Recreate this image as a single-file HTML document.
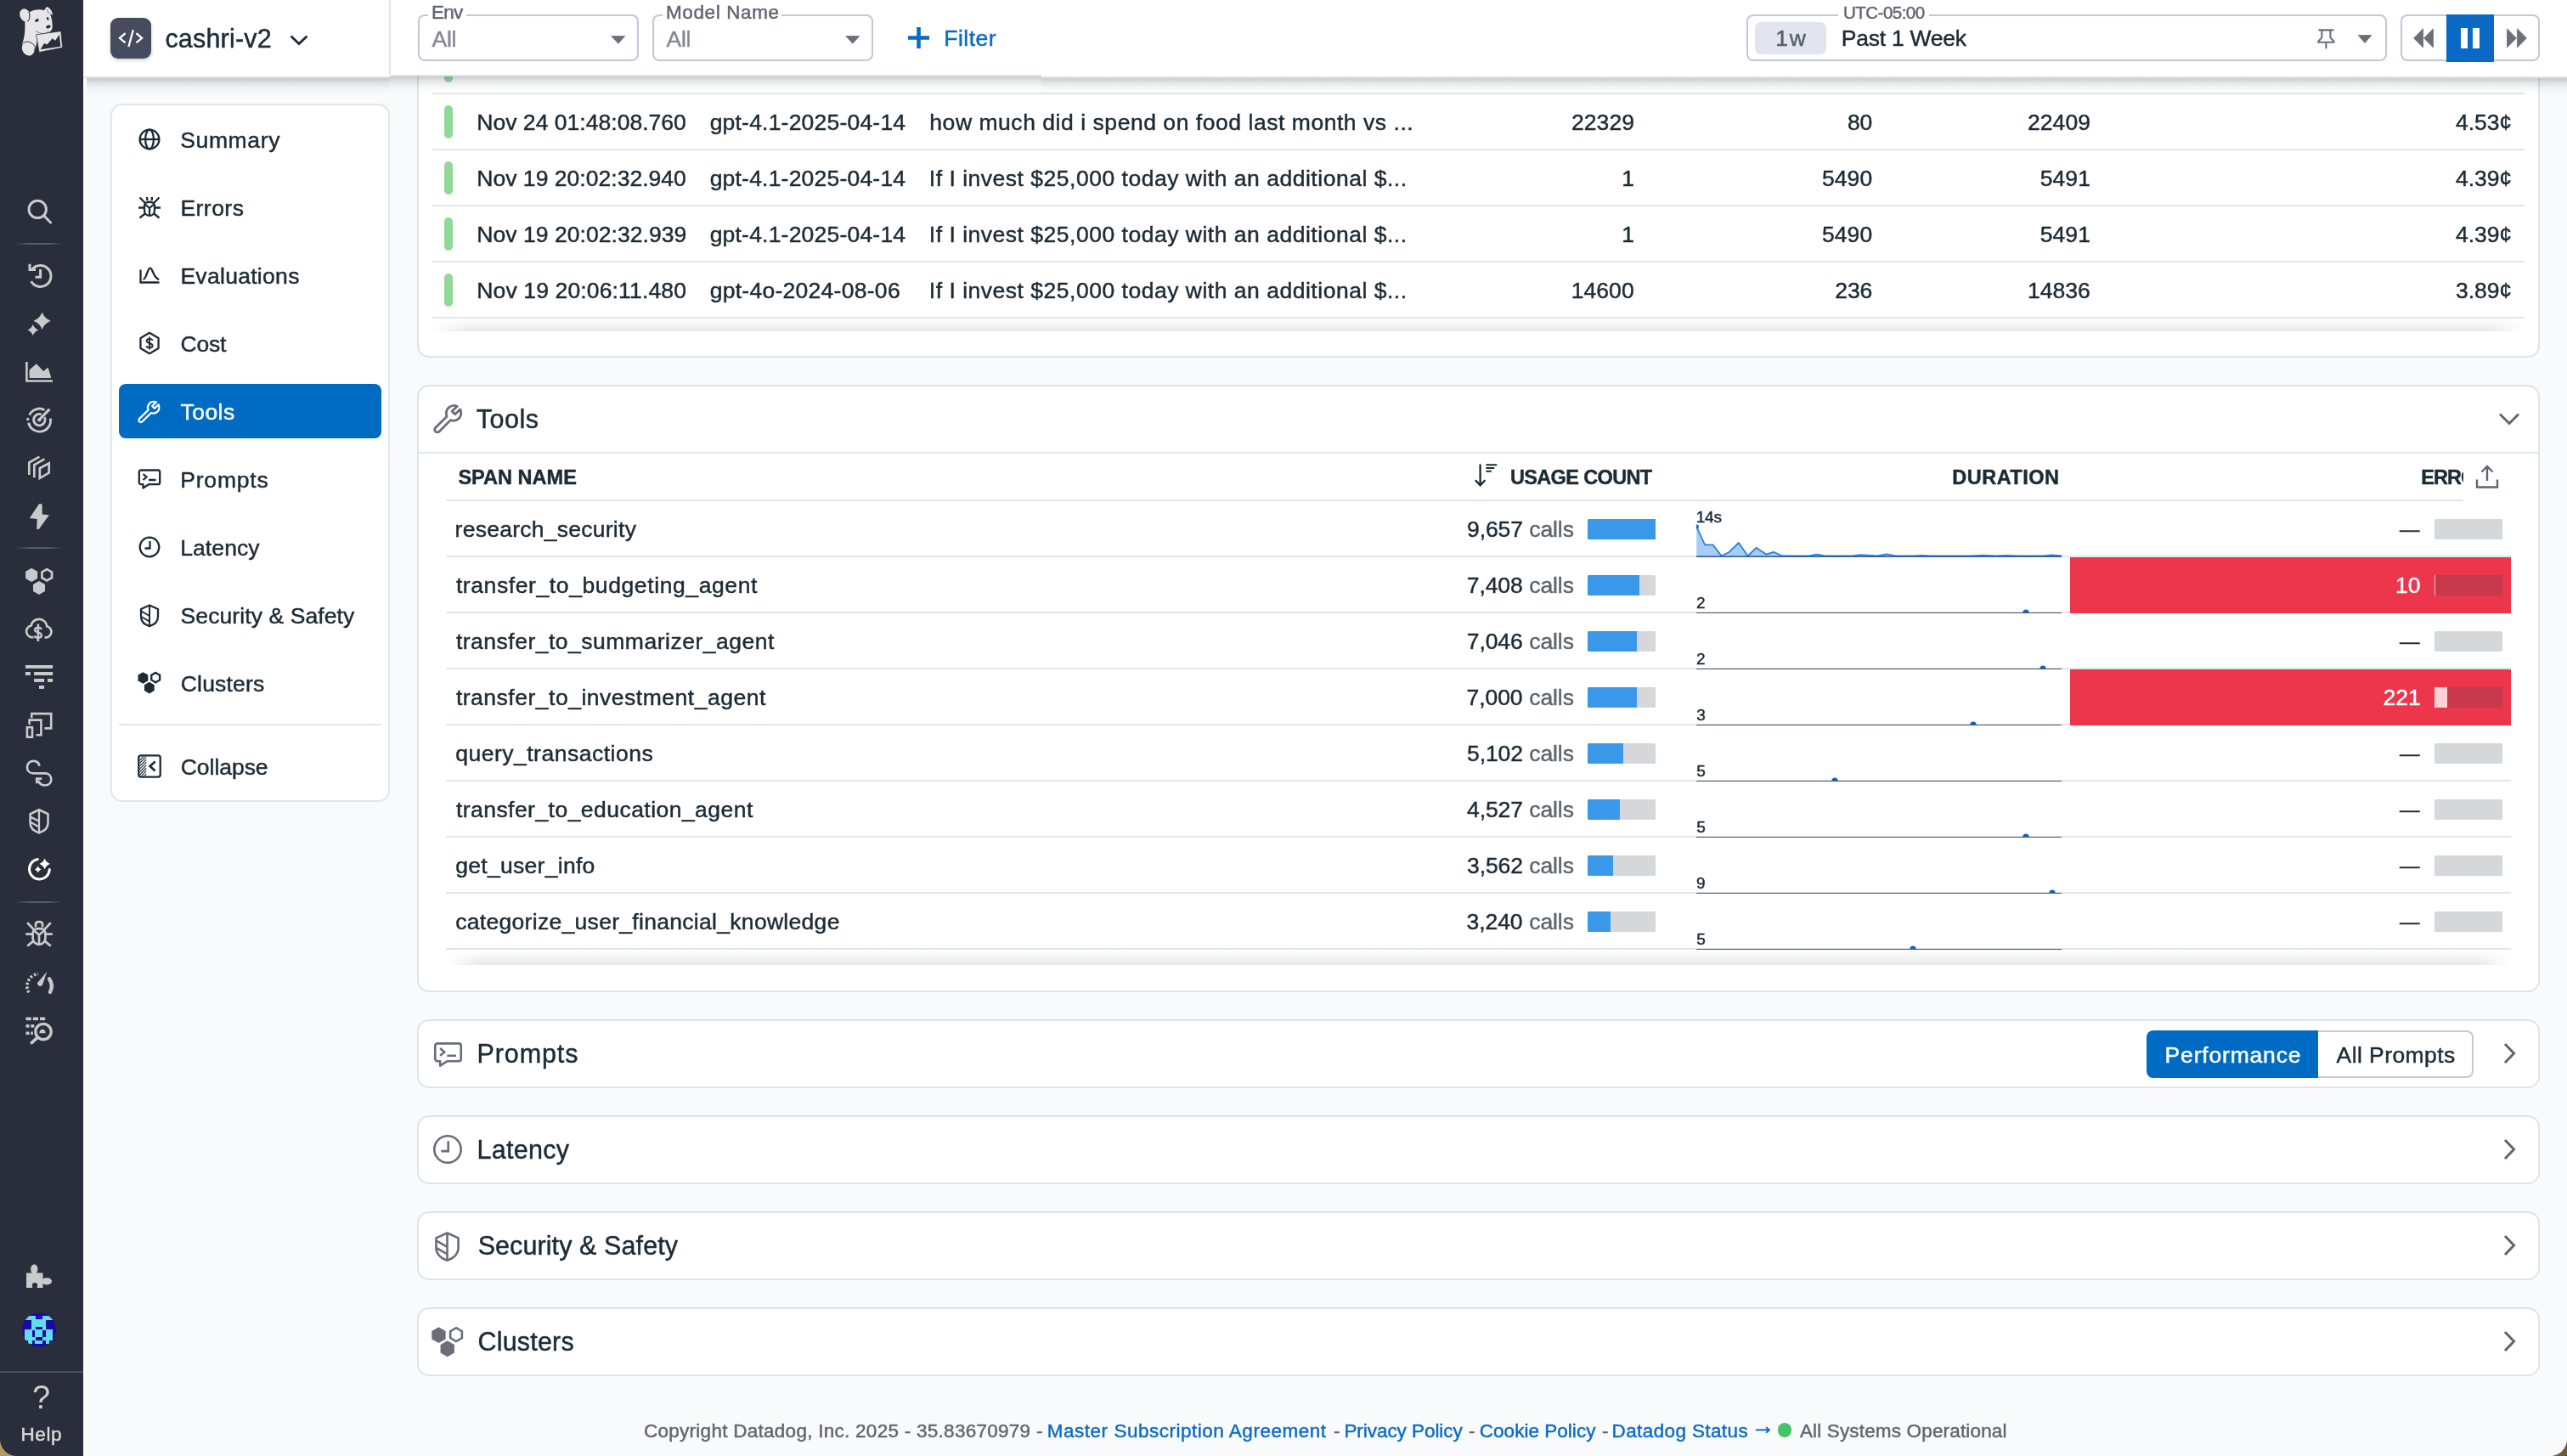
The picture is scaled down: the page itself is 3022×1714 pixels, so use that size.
<!DOCTYPE html>
<html lang="en"><head><meta charset="utf-8"><title>LLM Observability - cashri-v2</title><style>html,body{margin:0;padding:0}body{width:3022px;height:1714px;position:relative;overflow:hidden;background:#f9fafc;font-family:"Liberation Sans",sans-serif;}
#app{position:absolute;left:0;top:0;width:3022px;height:1714px;will-change:transform}
.b{position:absolute;display:block}.t{position:absolute;white-space:nowrap;display:block;-webkit-text-stroke:0.45px currentColor}</style></head><body>
<div id="app">
<div class="b" style="left:491px;top:-30px;width:2499px;height:451px;box-sizing:border-box;background:#fff;border:2px solid #e1e2ea;border-radius:14px;"></div>
<div class="b" style="left:509px;top:109px;width:2463px;height:2px;background:#e3e5ec;"></div>
<div class="b" style="left:509px;top:175px;width:2463px;height:2px;background:#e3e5ec;"></div>
<div class="b" style="left:509px;top:241px;width:2463px;height:2px;background:#e3e5ec;"></div>
<div class="b" style="left:509px;top:307px;width:2463px;height:2px;background:#e3e5ec;"></div>
<div class="b" style="left:509px;top:373px;width:2463px;height:2px;background:#e3e5ec;"></div>
<div class="b" style="left:523px;top:58px;width:10px;height:39px;background:#92d997;border-radius:5px;"></div>
<div class="b" style="left:523px;top:123.5px;width:10px;height:39.5px;background:#92d997;border-radius:5px;"></div>
<span class="t" style="left:561.28px;top:130.97px;font-size:26.5px;line-height:26.5px;color:#1c2b34;letter-spacing:0.03px;">Nov 24 01:48:08.760</span>
<span class="t" style="left:835.64px;top:130.97px;font-size:26.5px;line-height:26.5px;color:#1c2b34;letter-spacing:0.21px;">gpt-4.1-2025-04-14</span>
<span class="t" style="left:1094.35px;top:130.97px;font-size:26.5px;line-height:26.5px;color:#1c2b34;letter-spacing:0.54px;">how much did i spend on food last month vs ...</span>
<span class="t" style="left:1850.02px;top:130.97px;font-size:26.5px;line-height:26.5px;color:#1c2b34;letter-spacing:0.05px;">22329</span>
<span class="t" style="left:2174.89px;top:130.97px;font-size:26.5px;line-height:26.5px;color:#1c2b34;letter-spacing:-0.18px;">80</span>
<span class="t" style="left:2387.02px;top:130.97px;font-size:26.5px;line-height:26.5px;color:#1c2b34;letter-spacing:0.05px;">22409</span>
<span class="t" style="left:2891.06px;top:130.97px;font-size:26.5px;line-height:26.5px;color:#1c2b34;letter-spacing:-0.08px;">4.53¢</span>
<div class="b" style="left:523px;top:189.5px;width:10px;height:39.5px;background:#92d997;border-radius:5px;"></div>
<span class="t" style="left:561.28px;top:196.97px;font-size:26.5px;line-height:26.5px;color:#1c2b34;letter-spacing:0.03px;">Nov 19 20:02:32.940</span>
<span class="t" style="left:835.64px;top:196.97px;font-size:26.5px;line-height:26.5px;color:#1c2b34;letter-spacing:0.21px;">gpt-4.1-2025-04-14</span>
<span class="t" style="left:1093.82px;top:196.97px;font-size:26.5px;line-height:26.5px;color:#1c2b34;letter-spacing:0.51px;">If I invest $25,000 today with an additional $...</span>
<span class="t" style="left:1909.19px;top:196.97px;font-size:26.5px;line-height:26.5px;color:#1c2b34;">1</span>
<span class="t" style="left:2145.08px;top:196.97px;font-size:26.5px;line-height:26.5px;color:#1c2b34;letter-spacing:0.03px;">5490</span>
<span class="t" style="left:2401.84px;top:196.97px;font-size:26.5px;line-height:26.5px;color:#1c2b34;letter-spacing:0.03px;">5491</span>
<span class="t" style="left:2891.06px;top:196.97px;font-size:26.5px;line-height:26.5px;color:#1c2b34;letter-spacing:-0.08px;">4.39¢</span>
<div class="b" style="left:523px;top:255.5px;width:10px;height:39.5px;background:#92d997;border-radius:5px;"></div>
<span class="t" style="left:561.28px;top:262.97px;font-size:26.5px;line-height:26.5px;color:#1c2b34;letter-spacing:0.05px;">Nov 19 20:02:32.939</span>
<span class="t" style="left:835.64px;top:262.97px;font-size:26.5px;line-height:26.5px;color:#1c2b34;letter-spacing:0.21px;">gpt-4.1-2025-04-14</span>
<span class="t" style="left:1093.82px;top:262.97px;font-size:26.5px;line-height:26.5px;color:#1c2b34;letter-spacing:0.51px;">If I invest $25,000 today with an additional $...</span>
<span class="t" style="left:1909.19px;top:262.97px;font-size:26.5px;line-height:26.5px;color:#1c2b34;">1</span>
<span class="t" style="left:2145.08px;top:262.97px;font-size:26.5px;line-height:26.5px;color:#1c2b34;letter-spacing:0.03px;">5490</span>
<span class="t" style="left:2401.84px;top:262.97px;font-size:26.5px;line-height:26.5px;color:#1c2b34;letter-spacing:0.03px;">5491</span>
<span class="t" style="left:2891.06px;top:262.97px;font-size:26.5px;line-height:26.5px;color:#1c2b34;letter-spacing:-0.08px;">4.39¢</span>
<div class="b" style="left:523px;top:321.5px;width:10px;height:39.5px;background:#92d997;border-radius:5px;"></div>
<span class="t" style="left:561.28px;top:328.97px;font-size:26.5px;line-height:26.5px;color:#1c2b34;letter-spacing:0.14px;">Nov 19 20:06:11.480</span>
<span class="t" style="left:835.64px;top:328.97px;font-size:26.5px;line-height:26.5px;color:#1c2b34;letter-spacing:0.28px;">gpt-4o-2024-08-06</span>
<span class="t" style="left:1093.82px;top:328.97px;font-size:26.5px;line-height:26.5px;color:#1c2b34;letter-spacing:0.51px;">If I invest $25,000 today with an additional $...</span>
<span class="t" style="left:1849.76px;top:328.97px;font-size:26.5px;line-height:26.5px;color:#1c2b34;letter-spacing:0.05px;">14600</span>
<span class="t" style="left:2160.18px;top:328.97px;font-size:26.5px;line-height:26.5px;color:#1c2b34;letter-spacing:-0.02px;">236</span>
<span class="t" style="left:2386.89px;top:328.97px;font-size:26.5px;line-height:26.5px;color:#1c2b34;letter-spacing:0.05px;">14836</span>
<span class="t" style="left:2891.06px;top:328.97px;font-size:26.5px;line-height:26.5px;color:#1c2b34;letter-spacing:-0.08px;">3.89¢</span>
<div class="b" style="left:509px;top:375px;width:2463px;height:15px;background:linear-gradient(to bottom,rgba(20,25,40,0),rgba(20,25,40,.095));-webkit-mask-image:linear-gradient(to right,transparent,#000 40px,#000 calc(100% - 40px),transparent);"></div>
<div class="b" style="left:491px;top:453px;width:2499px;height:715px;box-sizing:border-box;background:#fff;border:2px solid #e1e2ea;border-radius:14px;"></div>
<span class="t" style="left:560.79px;top:477.68px;font-size:30.5px;line-height:30.5px;color:#1c2b34;letter-spacing:0.5px;">Tools</span>
<div class="b" style="left:493px;top:532px;width:2495px;height:2px;background:#e3e5ec;"></div>
<div class="b" style="left:525px;top:588px;width:2375px;height:2px;background:#e3e5ec;"></div>
<span class="t" style="left:539.39px;top:551.01px;font-size:23.5px;line-height:23.5px;color:#1c2b34;letter-spacing:0.03px;font-weight:700;">SPAN NAME</span>
<span class="t" style="left:1777.89px;top:551.01px;font-size:23.5px;line-height:23.5px;color:#1c2b34;letter-spacing:-0.63px;font-weight:700;">USAGE COUNT</span>
<span class="t" style="left:2298.27px;top:551.01px;font-size:23.5px;line-height:23.5px;color:#1c2b34;letter-spacing:0.49px;font-weight:700;">DURATION</span>
<div class="b" style="left:2840px;top:540px;width:60px;height:44px;overflow:hidden">
<span class="t" style="left:10.37px;top:11.01px;font-size:23.5px;line-height:23.5px;color:#1c2b34;letter-spacing:-0.97px;font-weight:700;">ERRORS</span>
</div>
<div class="b" style="left:2437px;top:656px;width:519px;height:66px;background:#eb364b;"></div>
<div class="b" style="left:2437px;top:788px;width:519px;height:66px;background:#eb364b;"></div>
<div class="b" style="left:525px;top:654px;width:2431px;height:2px;background:#e3e5ec"></div>
<span class="t" style="left:535.58px;top:610.47px;font-size:26.5px;line-height:26.5px;color:#1c2b34;letter-spacing:0.26px;">research_security</span>
<span class="t" style="left:1800.24px;top:610.47px;font-size:26.5px;line-height:26.5px;color:#5e6670;letter-spacing:-0.09px;">calls</span>
<span class="t" style="left:1727.00px;top:610.47px;font-size:26.5px;line-height:26.5px;color:#1c2b34;letter-spacing:-0.08px;">9,657</span>
<div class="b" style="left:1869px;top:611px;width:80px;height:24px;background:#d6d7da;border-radius:1.5px;"></div>
<div class="b" style="left:1869px;top:611px;width:80.0px;height:24px;background:#3a98ea;border-radius:1.5px 0 0 1.5px;"></div>
<span class="t" style="left:1996.68px;top:599.02px;font-size:19.0px;line-height:19.0px;color:#1c2b34;letter-spacing:-0.12px;">14s</span>
<div class="b" style="left:1997px;top:654.5px;width:430px;height:1.3px;background:#4d546a;"></div>
<span class="t" style="left:2825.10px;top:611.61px;font-size:23.5px;line-height:23.5px;color:#1c2b34;">—</span>
<div class="b" style="left:2866px;top:611px;width:80px;height:24px;background:#d6d7da;border-radius:1.5px;"></div>
<div class="b" style="left:525px;top:720px;width:1912px;height:2px;background:#e3e5ec"></div>
<span class="t" style="left:536.90px;top:676.47px;font-size:26.5px;line-height:26.5px;color:#1c2b34;letter-spacing:0.6px;">transfer_to_budgeting_agent</span>
<span class="t" style="left:1800.24px;top:676.47px;font-size:26.5px;line-height:26.5px;color:#5e6670;letter-spacing:-0.09px;">calls</span>
<span class="t" style="left:1726.73px;top:676.47px;font-size:26.5px;line-height:26.5px;color:#1c2b34;letter-spacing:-0.08px;">7,408</span>
<div class="b" style="left:1869px;top:677px;width:80px;height:24px;background:#d6d7da;border-radius:1.5px;"></div>
<div class="b" style="left:1869px;top:677px;width:61.4px;height:24px;background:#3a98ea;border-radius:1.5px 0 0 1.5px;"></div>
<span class="t" style="left:1996.95px;top:700.12px;font-size:19.0px;line-height:19.0px;color:#1c2b34;">2</span>
<div class="b" style="left:1997px;top:720.5px;width:430px;height:1.3px;background:#4d546a;"></div>
<svg class="b" style="left:2379.8px;top:715px" width="10" height="6" viewBox="0 0 10 6"><circle cx="5" cy="6" r="3.6" fill="#0b63c4"/></svg>
<span class="t" style="left:2820.09px;top:676.47px;font-size:26.5px;line-height:26.5px;color:#fff;letter-spacing:-0.18px;">10</span>
<div class="b" style="left:2866px;top:677px;width:80px;height:24px;background:#c8394d;"></div>
<div class="b" style="left:2866px;top:677px;width:1px;height:24px;background:#f6b9c0;"></div>
<div class="b" style="left:525px;top:786px;width:2431px;height:2px;background:#e3e5ec"></div>
<span class="t" style="left:536.90px;top:742.47px;font-size:26.5px;line-height:26.5px;color:#1c2b34;letter-spacing:0.5px;">transfer_to_summarizer_agent</span>
<span class="t" style="left:1800.24px;top:742.47px;font-size:26.5px;line-height:26.5px;color:#5e6670;letter-spacing:-0.09px;">calls</span>
<span class="t" style="left:1726.73px;top:742.47px;font-size:26.5px;line-height:26.5px;color:#1c2b34;letter-spacing:-0.08px;">7,046</span>
<div class="b" style="left:1869px;top:743px;width:80px;height:24px;background:#d6d7da;border-radius:1.5px;"></div>
<div class="b" style="left:1869px;top:743px;width:58.4px;height:24px;background:#3a98ea;border-radius:1.5px 0 0 1.5px;"></div>
<span class="t" style="left:1996.95px;top:766.12px;font-size:19.0px;line-height:19.0px;color:#1c2b34;">2</span>
<div class="b" style="left:1997px;top:786.5px;width:430px;height:1.3px;background:#4d546a;"></div>
<svg class="b" style="left:2400.4px;top:781px" width="10" height="6" viewBox="0 0 10 6"><circle cx="5" cy="6" r="3.6" fill="#0b63c4"/></svg>
<span class="t" style="left:2825.10px;top:743.61px;font-size:23.5px;line-height:23.5px;color:#1c2b34;">—</span>
<div class="b" style="left:2866px;top:743px;width:80px;height:24px;background:#d6d7da;border-radius:1.5px;"></div>
<div class="b" style="left:525px;top:852px;width:1912px;height:2px;background:#e3e5ec"></div>
<span class="t" style="left:536.90px;top:808.47px;font-size:26.5px;line-height:26.5px;color:#1c2b34;letter-spacing:0.51px;">transfer_to_investment_agent</span>
<span class="t" style="left:1800.24px;top:808.47px;font-size:26.5px;line-height:26.5px;color:#5e6670;letter-spacing:-0.09px;">calls</span>
<span class="t" style="left:1726.60px;top:808.47px;font-size:26.5px;line-height:26.5px;color:#1c2b34;letter-spacing:-0.08px;">7,000</span>
<div class="b" style="left:1869px;top:809px;width:80px;height:24px;background:#d6d7da;border-radius:1.5px;"></div>
<div class="b" style="left:1869px;top:809px;width:58.0px;height:24px;background:#3a98ea;border-radius:1.5px 0 0 1.5px;"></div>
<span class="t" style="left:1997.14px;top:832.12px;font-size:19.0px;line-height:19.0px;color:#1c2b34;">3</span>
<div class="b" style="left:1997px;top:852.5px;width:430px;height:1.3px;background:#4d546a;"></div>
<svg class="b" style="left:2318px;top:847px" width="10" height="6" viewBox="0 0 10 6"><circle cx="5" cy="6" r="3.6" fill="#0b63c4"/></svg>
<span class="t" style="left:2805.51px;top:808.47px;font-size:26.5px;line-height:26.5px;color:#fff;letter-spacing:-0.02px;">221</span>
<div class="b" style="left:2866px;top:809px;width:80px;height:24px;background:#c8394d;"></div>
<div class="b" style="left:2866px;top:809px;width:15px;height:24px;background:#fbd3d7;"></div>
<div class="b" style="left:525px;top:918px;width:2431px;height:2px;background:#e3e5ec"></div>
<span class="t" style="left:536.24px;top:874.47px;font-size:26.5px;line-height:26.5px;color:#1c2b34;letter-spacing:0.5px;">query_transactions</span>
<span class="t" style="left:1800.24px;top:874.47px;font-size:26.5px;line-height:26.5px;color:#5e6670;letter-spacing:-0.09px;">calls</span>
<span class="t" style="left:1727.00px;top:874.47px;font-size:26.5px;line-height:26.5px;color:#1c2b34;letter-spacing:-0.08px;">5,102</span>
<div class="b" style="left:1869px;top:875px;width:80px;height:24px;background:#d6d7da;border-radius:1.5px;"></div>
<div class="b" style="left:1869px;top:875px;width:42.2px;height:24px;background:#3a98ea;border-radius:1.5px 0 0 1.5px;"></div>
<span class="t" style="left:1997.14px;top:898.12px;font-size:19.0px;line-height:19.0px;color:#1c2b34;">5</span>
<div class="b" style="left:1997px;top:918.5px;width:430px;height:1.3px;background:#4d546a;"></div>
<svg class="b" style="left:2154.6px;top:913px" width="10" height="6" viewBox="0 0 10 6"><circle cx="5" cy="6" r="3.6" fill="#0b63c4"/></svg>
<span class="t" style="left:2825.10px;top:875.61px;font-size:23.5px;line-height:23.5px;color:#1c2b34;">—</span>
<div class="b" style="left:2866px;top:875px;width:80px;height:24px;background:#d6d7da;border-radius:1.5px;"></div>
<div class="b" style="left:525px;top:984px;width:2431px;height:2px;background:#e3e5ec"></div>
<span class="t" style="left:536.90px;top:940.47px;font-size:26.5px;line-height:26.5px;color:#1c2b34;letter-spacing:0.46px;">transfer_to_education_agent</span>
<span class="t" style="left:1800.24px;top:940.47px;font-size:26.5px;line-height:26.5px;color:#5e6670;letter-spacing:-0.09px;">calls</span>
<span class="t" style="left:1727.00px;top:940.47px;font-size:26.5px;line-height:26.5px;color:#1c2b34;letter-spacing:-0.08px;">4,527</span>
<div class="b" style="left:1869px;top:941px;width:80px;height:24px;background:#d6d7da;border-radius:1.5px;"></div>
<div class="b" style="left:1869px;top:941px;width:37.5px;height:24px;background:#3a98ea;border-radius:1.5px 0 0 1.5px;"></div>
<span class="t" style="left:1997.14px;top:964.12px;font-size:19.0px;line-height:19.0px;color:#1c2b34;">5</span>
<div class="b" style="left:1997px;top:984.5px;width:430px;height:1.3px;background:#4d546a;"></div>
<svg class="b" style="left:2379.5px;top:979px" width="10" height="6" viewBox="0 0 10 6"><circle cx="5" cy="6" r="3.6" fill="#0b63c4"/></svg>
<span class="t" style="left:2825.10px;top:941.61px;font-size:23.5px;line-height:23.5px;color:#1c2b34;">—</span>
<div class="b" style="left:2866px;top:941px;width:80px;height:24px;background:#d6d7da;border-radius:1.5px;"></div>
<div class="b" style="left:525px;top:1050px;width:2431px;height:2px;background:#e3e5ec"></div>
<span class="t" style="left:536.24px;top:1006.47px;font-size:26.5px;line-height:26.5px;color:#1c2b34;letter-spacing:0.29px;">get_user_info</span>
<span class="t" style="left:1800.24px;top:1006.47px;font-size:26.5px;line-height:26.5px;color:#5e6670;letter-spacing:-0.09px;">calls</span>
<span class="t" style="left:1727.00px;top:1006.47px;font-size:26.5px;line-height:26.5px;color:#1c2b34;letter-spacing:-0.08px;">3,562</span>
<div class="b" style="left:1869px;top:1007px;width:80px;height:24px;background:#d6d7da;border-radius:1.5px;"></div>
<div class="b" style="left:1869px;top:1007px;width:29.5px;height:24px;background:#3a98ea;border-radius:1.5px 0 0 1.5px;"></div>
<span class="t" style="left:1997.05px;top:1030.12px;font-size:19.0px;line-height:19.0px;color:#1c2b34;">9</span>
<div class="b" style="left:1997px;top:1050.5px;width:430px;height:1.3px;background:#4d546a;"></div>
<svg class="b" style="left:2410.5px;top:1045px" width="10" height="6" viewBox="0 0 10 6"><circle cx="5" cy="6" r="3.6" fill="#0b63c4"/></svg>
<span class="t" style="left:2825.10px;top:1007.61px;font-size:23.5px;line-height:23.5px;color:#1c2b34;">—</span>
<div class="b" style="left:2866px;top:1007px;width:80px;height:24px;background:#d6d7da;border-radius:1.5px;"></div>
<div class="b" style="left:525px;top:1116px;width:2431px;height:2px;background:#e3e5ec"></div>
<span class="t" style="left:536.24px;top:1072.47px;font-size:26.5px;line-height:26.5px;color:#1c2b34;letter-spacing:0.3px;">categorize_user_financial_knowledge</span>
<span class="t" style="left:1800.24px;top:1072.47px;font-size:26.5px;line-height:26.5px;color:#5e6670;letter-spacing:-0.09px;">calls</span>
<span class="t" style="left:1726.60px;top:1072.47px;font-size:26.5px;line-height:26.5px;color:#1c2b34;letter-spacing:-0.08px;">3,240</span>
<div class="b" style="left:1869px;top:1073px;width:80px;height:24px;background:#d6d7da;border-radius:1.5px;"></div>
<div class="b" style="left:1869px;top:1073px;width:26.9px;height:24px;background:#3a98ea;border-radius:1.5px 0 0 1.5px;"></div>
<span class="t" style="left:1997.14px;top:1096.12px;font-size:19.0px;line-height:19.0px;color:#1c2b34;">5</span>
<div class="b" style="left:1997px;top:1116.5px;width:430px;height:1.3px;background:#4d546a;"></div>
<svg class="b" style="left:2247px;top:1111px" width="10" height="6" viewBox="0 0 10 6"><circle cx="5" cy="6" r="3.6" fill="#0b63c4"/></svg>
<span class="t" style="left:2825.10px;top:1073.61px;font-size:23.5px;line-height:23.5px;color:#1c2b34;">—</span>
<div class="b" style="left:2866px;top:1073px;width:80px;height:24px;background:#d6d7da;border-radius:1.5px;"></div>
<svg class="b" style="left:1990px;top:600px" width="450" height="60" viewBox="0 0 450 60"><polygon points="7.2,19.9 17.1,41.4 26.5,41.4 36.7,54.5 45.2,50.2 56.9,39.0 67.6,54.5 77.5,44.8 89.1,52.6 98.1,49.8 108.2,54.5 139.6,54.5 148.9,52.6 158.3,54.5 191.0,54.5 200.4,53.2 220.0,54.5 231.2,52.3 241.5,54.5 262.0,54.5 272.0,53.8 282.0,54.5 330.0,54.5 345.0,53.6 360.0,54.5 373.0,53.8 386.0,54.5 415.0,54.5 425.7,53.5 437.0,54.5 437,55 7.2,55" fill="#a8cdf4"/><polyline points="7.2,19.9 17.1,41.4 26.5,41.4 36.7,54.5 45.2,50.2 56.9,39.0 67.6,54.5 77.5,44.8 89.1,52.6 98.1,49.8 108.2,54.5 139.6,54.5 148.9,52.6 158.3,54.5 191.0,54.5 200.4,53.2 220.0,54.5 231.2,52.3 241.5,54.5 262.0,54.5 272.0,53.8 282.0,54.5 330.0,54.5 345.0,53.6 360.0,54.5 373.0,53.8 386.0,54.5 415.0,54.5 425.7,53.5 437.0,54.5" fill="none" stroke="#2a80db" stroke-width="1.8" stroke-linejoin="round"/><rect x="7" y="54.4" width="430" height="1.4" fill="#2b5f9e"/><path d="M7.2 17.2A2.7 2.7 0 0 1 7.2 22.6Z" fill="#1668c9"/></svg>
<div class="b" style="left:2900px;top:540px;width:56px;height:46px;background:#fff;"></div>
<div class="b" style="left:525px;top:1119px;width:2431px;height:17px;background:linear-gradient(to bottom,rgba(20,25,40,0),rgba(20,25,40,.10));-webkit-mask-image:linear-gradient(to right,transparent,#000 40px,#000 calc(100% - 40px),transparent);"></div>
<div class="b" style="left:491px;top:1200px;width:2499px;height:80.5px;box-sizing:border-box;background:#fff;border:2px solid #e1e2ea;border-radius:14px;"></div>
<span class="t" style="left:561.56px;top:1224.58px;font-size:30.5px;line-height:30.5px;color:#1c2b34;letter-spacing:0.89px;">Prompts</span>
<div class="b" style="left:491px;top:1313.2px;width:2499px;height:80.5px;box-sizing:border-box;background:#fff;border:2px solid #e1e2ea;border-radius:14px;"></div>
<span class="t" style="left:561.56px;top:1337.78px;font-size:30.5px;line-height:30.5px;color:#1c2b34;letter-spacing:0.26px;">Latency</span>
<div class="b" style="left:491px;top:1426px;width:2499px;height:80.5px;box-sizing:border-box;background:#fff;border:2px solid #e1e2ea;border-radius:14px;"></div>
<span class="t" style="left:562.63px;top:1450.58px;font-size:30.5px;line-height:30.5px;color:#1c2b34;letter-spacing:0.09px;">Security &amp; Safety</span>
<div class="b" style="left:491px;top:1539.4px;width:2499px;height:80.5px;box-sizing:border-box;background:#fff;border:2px solid #e1e2ea;border-radius:14px;"></div>
<span class="t" style="left:562.48px;top:1563.98px;font-size:30.5px;line-height:30.5px;color:#1c2b34;letter-spacing:0.19px;">Clusters</span>
<div class="b" style="left:2527px;top:1213px;width:202px;height:56px;background:#006bc2;border-radius:8px 0 0 8px;"></div>
<div class="b" style="left:2729px;top:1213px;width:183px;height:56px;box-sizing:border-box;background:#fff;border:2px solid #c4c8dc;border-left:none;border-radius:0 8px 8px 0;"></div>
<span class="t" style="left:2548.58px;top:1228.87px;font-size:26.5px;line-height:26.5px;color:#fff;letter-spacing:0.82px;">Performance</span>
<span class="t" style="left:2750.60px;top:1228.87px;font-size:26.5px;line-height:26.5px;color:#1c2b34;letter-spacing:0.42px;">All Prompts</span>
<span class="t" style="left:757.98px;top:1673.85px;font-size:22.5px;line-height:22.5px;color:#5e6670;letter-spacing:0.27px;">Copyright Datadog, Inc. 2025 - 35.83670979</span>
<span class="t" style="left:1219.89px;top:1673.85px;font-size:22.5px;line-height:22.5px;color:#5e6670;">-</span>
<span class="t" style="left:1232.80px;top:1673.85px;font-size:22.5px;line-height:22.5px;color:#0b6bc5;letter-spacing:0.51px;">Master Subscription Agreement</span>
<span class="t" style="left:1569.89px;top:1673.85px;font-size:22.5px;line-height:22.5px;color:#5e6670;">-</span>
<span class="t" style="left:1582.40px;top:1673.85px;font-size:22.5px;line-height:22.5px;color:#0b6bc5;letter-spacing:-0.05px;">Privacy Policy</span>
<span class="t" style="left:1728.89px;top:1673.85px;font-size:22.5px;line-height:22.5px;color:#5e6670;">-</span>
<span class="t" style="left:1741.78px;top:1673.85px;font-size:22.5px;line-height:22.5px;color:#0b6bc5;letter-spacing:0.03px;">Cookie Policy</span>
<span class="t" style="left:1885.89px;top:1673.85px;font-size:22.5px;line-height:22.5px;color:#5e6670;">-</span>
<span class="t" style="left:1897.60px;top:1673.85px;font-size:22.5px;line-height:22.5px;color:#0b6bc5;letter-spacing:0.38px;">Datadog Status</span>
<span class="t" style="left:2118.90px;top:1673.85px;font-size:22.5px;line-height:22.5px;color:#5e6670;letter-spacing:0.16px;">All Systems Operational</span>
<div class="b" style="left:2092.6px;top:1675px;width:16.6px;height:16.6px;background:#41c464;border-radius:50%;"></div>
<span class="t" style="left:2061.16px;top:1665.40px;font-size:28.0px;line-height:28.0px;color:#0b6bc5;-webkit-text-stroke:0.7px #0b6bc5;">→</span>
<svg class="b" style="left:510px;top:473.5px" width="36" height="36" viewBox="0 0 36 36"><g fill="none" stroke="#696e78" stroke-width="2.15" transform="translate(18 18) scale(1.3) translate(-18 -18)"><path d="M28.6 10.2L24 14.8L21.2 12L25.8 7.4C22.8 6.2 19.2 7 17.3 9.6C15.7 11.8 15.6 14.4 16.5 16.6L6.2 26.9C5.2 27.9 5.2 29.4 6.2 30.3C7.2 31.3 8.6 31.3 9.6 30.3L19.9 20C22.2 20.9 24.9 20.6 27 18.9C29.4 16.9 30 13.2 28.6 10.2Z" stroke-linejoin="round"/></g></svg>
<svg class="b" style="left:504.5px;top:1219.0px" width="45" height="45" viewBox="0 0 36 36"><g fill="none" stroke="#696e78" stroke-width="2.10" stroke-linecap="butt" stroke-linejoin="miter"><path d="M8 7.5H28A2.2 2.2 0 0 1 30.2 9.7V22A2.2 2.2 0 0 1 28 24.2H17L10.5 28.5V24.2H8A2.2 2.2 0 0 1 5.8 22V9.7A2.2 2.2 0 0 1 8 7.5Z" stroke-linejoin="round"/><path d="M10.5 12L14.5 15.5L10.5 19M17 19H25.5"/></g></svg>
<svg class="b" style="left:501.79999999999995px;top:1327.8px" width="50" height="50" viewBox="0 0 36 36"><g fill="none" stroke="#696e78" stroke-width="1.89" stroke-linecap="butt" stroke-linejoin="miter"><circle cx="18" cy="18" r="11.3"/><path d="M18.5 11V19.5H12.5"/></g></svg>
<svg class="b" style="left:503.29999999999995px;top:1442.5px" width="47" height="47" viewBox="0 0 36 36"><g fill="none" stroke="#696e78" stroke-width="2.01" stroke-linecap="butt" stroke-linejoin="miter"><path d="M18 6.5L28 11V20C28 25.5 23.5 29.5 18 31.2C12.5 29.5 8 25.5 8 20V11Z" stroke-linejoin="round"/><path d="M18 6.5V31M8.3 13.5L18 19M8.3 20L18 25.5" stroke-width="2"/></g></svg>
<svg class="b" style="left:501.79999999999995px;top:1554.5px" width="50" height="50" viewBox="0 0 36 36"><g fill="none" stroke="#696e78" stroke-width="1.89" stroke-linecap="butt" stroke-linejoin="miter"><polygon points="10.40,5.20 16.29,8.60 16.29,15.40 10.40,18.80 4.51,15.40 4.51,8.60" fill="#696e78" stroke="none"/><polygon points="17.80,16.80 23.69,20.20 23.69,27.00 17.80,30.40 11.91,27.00 11.91,20.20" fill="#696e78" stroke="none"/><polygon points="25.20,5.90 30.14,8.75 30.14,14.45 25.20,17.30 20.26,14.45 20.26,8.75"/></g></svg>
<svg class="b" style="left:2940px;top:484px" width="28" height="18" viewBox="0 0 28 18"><path d="M3 3.5L14 14.5L25 3.5" fill="none" stroke="#5f6670" stroke-width="3"/></svg>
<svg class="b" style="left:2945px;top:1226px" width="18" height="28" viewBox="0 0 18 28"><path d="M4 3L14.5 14L4 25" fill="none" stroke="#5f6670" stroke-width="3"/></svg>
<svg class="b" style="left:2945px;top:1339px" width="18" height="28" viewBox="0 0 18 28"><path d="M4 3L14.5 14L4 25" fill="none" stroke="#5f6670" stroke-width="3"/></svg>
<svg class="b" style="left:2945px;top:1452px" width="18" height="28" viewBox="0 0 18 28"><path d="M4 3L14.5 14L4 25" fill="none" stroke="#5f6670" stroke-width="3"/></svg>
<svg class="b" style="left:2945px;top:1565px" width="18" height="28" viewBox="0 0 18 28"><path d="M4 3L14.5 14L4 25" fill="none" stroke="#5f6670" stroke-width="3"/></svg>
<svg class="b" style="left:1733px;top:543px" width="32" height="32" viewBox="0 0 32 32"><g fill="none" stroke="#1c2b34" stroke-width="2.3"><path d="M9.6 3.4V27.6M3.8 22.2L9.6 28.3L15.4 22.2"/><path d="M16.4 4.3H29.2M16.4 8.05H26.2M16.4 11.8H22.8" stroke-width="2"/></g></svg>
<svg class="b" style="left:2912px;top:545px" width="32" height="32" viewBox="0 0 32 32"><g fill="none" stroke="#5f6670" stroke-width="2.4"><path d="M16 21V4M9.5 10.5L16 4L22.5 10.5M4 19.5V28.5H28V19.5"/></g></svg>
<div class="b" style="left:130px;top:122px;width:329px;height:822px;box-sizing:border-box;background:#fff;border:2px solid #e3e4ec;border-radius:14px;"></div>
<div class="b" style="left:140px;top:452px;width:309px;height:64px;background:#006bc2;border-radius:8px;"></div>
<div class="b" style="left:140px;top:852px;width:309px;height:2px;background:#e3e5ec;"></div>
<span class="t" style="left:212.21px;top:151.97px;font-size:26.5px;line-height:26.5px;color:#1c2b34;letter-spacing:0.64px;">Summary</span>
<svg class="b" style="left:158px;top:146px" width="36" height="36" viewBox="0 0 36 36"><g fill="none" stroke="#1c2b34" stroke-width="2.3" stroke-linecap="butt" stroke-linejoin="miter"><circle cx="18" cy="18" r="11.4"/><ellipse cx="18" cy="18" rx="4.9" ry="11.4"/><path d="M6.6 18H29.4"/></g></svg>
<span class="t" style="left:212.38px;top:231.97px;font-size:26.5px;line-height:26.5px;color:#1c2b34;letter-spacing:0.48px;">Errors</span>
<svg class="b" style="left:158px;top:226px" width="36" height="36" viewBox="0 0 36 36"><g fill="none" stroke="#1c2b34" stroke-width="2.3" stroke-linecap="butt" stroke-linejoin="miter"><path d="M12 15.5C12 10.5 24 10.5 24 15.5V21.5C24 30 12 30 12 21.5Z"/><path d="M18 28V19L12.8 14.5M18 19L23.2 14.5"/><path d="M6.5 6.5L13 13M29.5 6.5L23 13M5 18.5H12M24 18.5H31M6.5 30.5L12.8 25.5M29.5 30.5L23.2 25.5M15.2 10V6M20.8 10V6"/></g></svg>
<span class="t" style="left:212.38px;top:311.97px;font-size:26.5px;line-height:26.5px;color:#1c2b34;letter-spacing:0.3px;">Evaluations</span>
<svg class="b" style="left:158px;top:306px" width="36" height="36" viewBox="0 0 36 36"><g fill="none" stroke="#1c2b34" stroke-width="2.3" stroke-linecap="butt" stroke-linejoin="miter"><path d="M7.5 11.5V26.5H29.5"/><path d="M10.6 23C15.2 21.5 15.4 9.6 18.7 9.6C22 9.6 22.4 21.5 29.3 23"/></g></svg>
<span class="t" style="left:212.58px;top:391.97px;font-size:26.5px;line-height:26.5px;color:#1c2b34;letter-spacing:-0.25px;">Cost</span>
<svg class="b" style="left:158px;top:386px" width="36" height="36" viewBox="0 0 36 36"><g fill="none" stroke="#1c2b34" stroke-width="2.3" stroke-linecap="butt" stroke-linejoin="miter"><polygon points="18.00,5.80 28.57,11.90 28.57,24.10 18.00,30.20 7.43,24.10 7.43,11.90" stroke-linejoin="round"/><path d="M18 10.5V25.5" stroke-width="1.9"/><path d="M21.6 14.8C21 12.4 14.6 12.2 14.6 15.4C14.6 18.6 21.6 17.4 21.6 20.9C21.6 24 15 24 14.3 21.2" stroke-width="1.9"/></g></svg>
<span class="t" style="left:212.57px;top:471.97px;font-size:26.5px;line-height:26.5px;color:#fff;letter-spacing:0.43px;">Tools</span>
<svg class="b" style="left:158px;top:466px" width="36" height="36" viewBox="0 0 36 36"><g fill="none" stroke="#fff" stroke-width="2.3" stroke-linecap="butt" stroke-linejoin="miter"><path d="M28.6 10.2L24 14.8L21.2 12L25.8 7.4C22.8 6.2 19.2 7 17.3 9.6C15.7 11.8 15.6 14.4 16.5 16.6L6.2 26.9C5.2 27.9 5.2 29.4 6.2 30.3C7.2 31.3 8.6 31.3 9.6 30.3L19.9 20C22.2 20.9 24.9 20.6 27 18.9C29.4 16.9 30 13.2 28.6 10.2Z" stroke-linejoin="round"/></g></svg>
<span class="t" style="left:212.18px;top:551.97px;font-size:26.5px;line-height:26.5px;color:#1c2b34;letter-spacing:0.83px;">Prompts</span>
<svg class="b" style="left:158px;top:546px" width="36" height="36" viewBox="0 0 36 36"><g fill="none" stroke="#1c2b34" stroke-width="2.3" stroke-linecap="butt" stroke-linejoin="miter"><path d="M8 7.5H28A2.2 2.2 0 0 1 30.2 9.7V22A2.2 2.2 0 0 1 28 24.2H17L10.5 28.5V24.2H8A2.2 2.2 0 0 1 5.8 22V9.7A2.2 2.2 0 0 1 8 7.5Z" stroke-linejoin="round"/><path d="M10.5 12L14.5 15.5L10.5 19M17 19H25.5"/></g></svg>
<span class="t" style="left:212.18px;top:631.97px;font-size:26.5px;line-height:26.5px;color:#1c2b34;letter-spacing:0.1px;">Latency</span>
<svg class="b" style="left:158px;top:626px" width="36" height="36" viewBox="0 0 36 36"><g fill="none" stroke="#1c2b34" stroke-width="2.3" stroke-linecap="butt" stroke-linejoin="miter"><circle cx="18" cy="18" r="11.3"/><path d="M18.5 11V19.5H12.5"/></g></svg>
<span class="t" style="left:212.61px;top:711.97px;font-size:26.5px;line-height:26.5px;color:#1c2b34;letter-spacing:0.09px;">Security &amp; Safety</span>
<svg class="b" style="left:158px;top:706px" width="36" height="36" viewBox="0 0 36 36"><g fill="none" stroke="#1c2b34" stroke-width="2.3" stroke-linecap="butt" stroke-linejoin="miter"><path d="M18 6.5L28 11V20C28 25.5 23.5 29.5 18 31.2C12.5 29.5 8 25.5 8 20V11Z" stroke-linejoin="round"/><path d="M18 6.5V31M8.3 13.5L18 19M8.3 20L18 25.5" stroke-width="2"/></g></svg>
<span class="t" style="left:212.78px;top:791.97px;font-size:26.5px;line-height:26.5px;color:#1c2b34;letter-spacing:0.18px;">Clusters</span>
<svg class="b" style="left:158px;top:786px" width="36" height="36" viewBox="0 0 36 36"><g fill="none" stroke="#1c2b34" stroke-width="2.3" stroke-linecap="butt" stroke-linejoin="miter"><polygon points="10.40,5.20 16.29,8.60 16.29,15.40 10.40,18.80 4.51,15.40 4.51,8.60" fill="#1c2b34" stroke="none"/><polygon points="17.80,16.80 23.69,20.20 23.69,27.00 17.80,30.40 11.91,27.00 11.91,20.20" fill="#1c2b34" stroke="none"/><polygon points="25.20,5.90 30.14,8.75 30.14,14.45 25.20,17.30 20.26,14.45 20.26,8.75"/></g></svg>
<span class="t" style="left:212.78px;top:889.97px;font-size:26.5px;line-height:26.5px;color:#1c2b34;letter-spacing:-0.04px;">Collapse</span>
<svg class="b" style="left:158px;top:884px" width="36" height="36" viewBox="0 0 36 36"><g fill="none" stroke="#1c2b34" stroke-width="2.3" stroke-linecap="butt" stroke-linejoin="miter"><rect x="5.3" y="5.3" width="25.4" height="25.4" rx="2.6"/><path d="M24.6 12.6L18.6 18.1L24.6 23.6" stroke-width="2.7"/><clipPath id="cl"><rect x="6.5" y="6.5" width="8" height="23"/></clipPath><path d="M6 11.5L14.5 3.0M6 14.9L14.5 6.4M6 18.3L14.5 9.8M6 21.7L14.5 13.2M6 25.1L14.5 16.6M6 28.5L14.5 20.0M6 31.9L14.5 23.4M6 35.3L14.5 26.8M6 38.7L14.5 30.2" stroke-width="1.15" clip-path="url(#cl)"/></g></svg>
<div class="b" style="left:98px;top:92px;width:360px;height:20px;background:linear-gradient(to bottom,rgba(40,48,62,.25),rgba(40,48,62,.135) 25%,rgba(40,48,62,.06) 50%,rgba(40,48,62,.02) 75%,rgba(40,48,62,0));"></div>
<div class="b" style="left:1226px;top:92px;width:1796px;height:20px;background:linear-gradient(to bottom,rgba(40,48,62,.25),rgba(40,48,62,.135) 25%,rgba(40,48,62,.06) 50%,rgba(40,48,62,.02) 75%,rgba(40,48,62,0));"></div>
<div class="b" style="left:458px;top:90px;width:768px;height:20px;background:linear-gradient(to bottom,rgba(40,48,62,.25),rgba(40,48,62,.135) 25%,rgba(40,48,62,.06) 50%,rgba(40,48,62,.02) 75%,rgba(40,48,62,0));"></div>
<div class="b" style="left:98px;top:0px;width:2924px;height:90px;background:#fff;"></div>
<div class="b" style="left:98px;top:90px;width:360px;height:2px;background:#dfe2e9;"></div>
<div class="b" style="left:1226px;top:90px;width:1796px;height:2px;background:#dfe2e9;"></div>
<div class="b" style="left:458px;top:0px;width:2px;height:88px;background:#e4e6ee;"></div>
<div class="b" style="left:460px;top:88px;width:766px;height:2px;background:#dfe2e9;"></div>
<div class="b" style="left:130px;top:21px;width:48px;height:48px;background:#464b5d;border-radius:9px;box-shadow:0 2px 4px rgba(0,0,0,.18);"></div>
<svg class="b" style="left:130px;top:21px" width="48" height="48" viewBox="0 0 48 48"><path d="M17.6 18.2L10.9 23.8L17.6 29.4M30.4 18.2L37.1 23.8L30.4 29.4M26.8 14.2L21.4 34" fill="none" stroke="#fff" stroke-width="2.3" stroke-linecap="butt"/></svg>
<span class="t" style="left:194.38px;top:30.48px;font-size:30.5px;line-height:30.5px;color:#1c2b34;letter-spacing:0.2px;">cashri-v2</span>
<svg class="b" style="left:338px;top:38px" width="28" height="18" viewBox="0 0 28 18"><path d="M4.5 4.5L14 13.5L23.5 4.5" fill="none" stroke="#1c2b34" stroke-width="2.8"/></svg>
<div class="b" style="left:492px;top:17px;width:260px;height:55px;box-sizing:border-box;border:2px solid #c3c6dc;border-radius:8px;background:#fff;"></div>
<div class="b" style="left:503.7px;top:15px;width:45.5px;height:6px;background:#fff;"></div>
<span class="t" style="left:507.90px;top:3.95px;font-size:22.5px;line-height:22.5px;color:#5e6670;letter-spacing:-0.73px;">Env</span>
<span class="t" style="left:508.50px;top:33.07px;font-size:26.5px;line-height:26.5px;color:#858a92;letter-spacing:-0.27px;">All</span>
<svg class="b" style="left:719px;top:41.5px" width="18" height="10" viewBox="0 0 18 10"><path d="M0.8 0.4H16.8L8.8 9.2Z" fill="#6a6f7a" stroke="#6a6f7a" stroke-width="0.8" stroke-linejoin="round"/></svg>
<div class="b" style="left:768px;top:17px;width:260px;height:55px;box-sizing:border-box;border:2px solid #c3c6dc;border-radius:8px;background:#fff;"></div>
<div class="b" style="left:779.7px;top:15px;width:140.4px;height:6px;background:#fff;"></div>
<span class="t" style="left:783.90px;top:3.95px;font-size:22.5px;line-height:22.5px;color:#5e6670;letter-spacing:0.62px;">Model Name</span>
<span class="t" style="left:784.50px;top:33.07px;font-size:26.5px;line-height:26.5px;color:#858a92;letter-spacing:-0.27px;">All</span>
<svg class="b" style="left:995px;top:41.5px" width="18" height="10" viewBox="0 0 18 10"><path d="M0.8 0.4H16.8L8.8 9.2Z" fill="#6a6f7a" stroke="#6a6f7a" stroke-width="0.8" stroke-linejoin="round"/></svg>
<svg class="b" style="left:1068px;top:31px" width="27" height="27" viewBox="0 0 27 27"><path d="M13.5 1V26M1 13.5H26" stroke="#0b6bc5" stroke-width="4.6"/></svg>
<span class="t" style="left:1111.28px;top:32.07px;font-size:26.5px;line-height:26.5px;color:#0b6bc5;letter-spacing:0.49px;">Filter</span>
<div class="b" style="left:2056px;top:17px;width:754px;height:55px;box-sizing:border-box;border:2px solid #c3c6dc;border-radius:8px;background:#fff;"></div>
<div class="b" style="left:2164px;top:15px;width:107px;height:6px;background:#fff;"></div>
<div class="b" style="left:2066px;top:26px;width:84px;height:38px;background:#e3e5ee;border-radius:7px;"></div>
<span class="t" style="left:2090.31px;top:32.27px;font-size:26.5px;line-height:26.5px;color:#5a616c;letter-spacing:1.62px;">1w</span>
<span class="t" style="left:2170.06px;top:4.55px;font-size:20.5px;line-height:20.5px;color:#5e6670;letter-spacing:-0.52px;">UTC-05:00</span>
<span class="t" style="left:2167.78px;top:32.27px;font-size:26.5px;line-height:26.5px;color:#1c2b34;letter-spacing:-0.24px;">Past 1 Week</span>
<svg class="b" style="left:2725.6px;top:33.3px" width="25" height="26" viewBox="0 0 25 26"><g fill="none" stroke="#6a6f7a" stroke-width="2.1" stroke-linejoin="round"><path d="M3.4 2.4H21.4M7.4 2.4V10.5C7.4 12.5 3.4 14.5 3 16.7H21.8C21.4 14.5 17.4 12.5 17.4 10.5V2.4M12.4 16.7V24.3"/></g></svg>
<svg class="b" style="left:2775px;top:41.2px" width="18" height="10" viewBox="0 0 18 10"><path d="M1 0.3H17L9 9.5Z" fill="#6a6f7a" stroke="#6a6f7a" stroke-width="0.8" stroke-linejoin="round"/></svg>
<div class="b" style="left:2826px;top:17px;width:164px;height:55px;box-sizing:border-box;border:2px solid #c3c6dc;border-radius:8px;background:#fff;"></div>
<div class="b" style="left:2880px;top:17px;width:56px;height:56px;background:#0a69c5;"></div>
<svg class="b" style="left:2841px;top:33px" width="24" height="24" viewBox="0 0 24 24"><path d="M11.6 0.8V23L0.6 11.9ZM23.6 0.8V23L12.6 11.9Z" fill="#6a6f7a" stroke="#6a6f7a" stroke-width="0.8" stroke-linejoin="round"/></svg>
<svg class="b" style="left:2950.6px;top:33px" width="24" height="24" viewBox="0 0 24 24"><path d="M0.4 0.8V23L11.4 11.9ZM12.4 0.8V23L23.4 11.9Z" fill="#6a6f7a" stroke="#6a6f7a" stroke-width="0.8" stroke-linejoin="round"/></svg>
<div class="b" style="left:2897.2px;top:32.6px;width:7.6px;height:24.8px;background:#fff;"></div>
<div class="b" style="left:2911.2px;top:32.6px;width:7.7px;height:24.8px;background:#fff;"></div>
<div class="b" style="left:98px;top:92px;width:4px;height:1622px;background:#fdfdfe;"></div>
<div class="b" style="left:0px;top:0px;width:98px;height:1714px;background:#2a2d3b;"></div>
<div class="b" style="left:18px;top:285.7px;width:56px;height:2px;background:linear-gradient(to right,rgba(255,255,255,0),rgba(255,255,255,.22) 30%,rgba(255,255,255,.22) 70%,rgba(255,255,255,0));"></div>
<div class="b" style="left:18px;top:644.4px;width:56px;height:2px;background:linear-gradient(to right,rgba(255,255,255,0),rgba(255,255,255,.22) 30%,rgba(255,255,255,.22) 70%,rgba(255,255,255,0));"></div>
<div class="b" style="left:18px;top:1061px;width:56px;height:2px;background:linear-gradient(to right,rgba(255,255,255,0),rgba(255,255,255,.22) 30%,rgba(255,255,255,.22) 70%,rgba(255,255,255,0));"></div>
<div class="b" style="left:0px;top:1613.5px;width:98px;height:2px;background:#4b4f5e;"></div>
<span class="t" style="left:24.40px;top:1677.85px;font-size:22.5px;line-height:22.5px;color:#d8d9db;letter-spacing:0.64px;">Help</span>
<span class="t" style="left:37.88px;top:1625.93px;font-size:38.0px;line-height:38.0px;color:#cfd0d2;-webkit-text-stroke:0;">?</span>
<svg class="b" style="left:0;top:0" width="98" height="1714" viewBox="0 0 98 1714"><g transform="translate(14,0) scale(0.04808)"><ellipse cx="320" cy="370" rx="125" ry="160" transform="rotate(-22 320 370)" fill="#e6e6e6"/><path d="M430 300C520 235 690 215 790 255L850 165C930 175 995 280 1000 375L935 335C965 420 990 520 992 620C1000 700 965 775 905 790L835 830L650 835L600 850L618 1000L580 1180L250 1080C300 950 325 800 320 600C310 520 350 400 430 300Z" fill="#e6e6e6"/><path d="M415 290C450 370 440 470 380 530" fill="none" stroke="#2a2d3b" stroke-width="22"/><ellipse cx="400" cy="1190" rx="150" ry="178" transform="rotate(-25 400 1190)" fill="#e6e6e6"/><path d="M268 1062C360 985 520 1020 575 1165" fill="none" stroke="#2a2d3b" stroke-width="20"/><path d="M596 850L1202 762L1238 1165L668 1278Z" fill="#e6e6e6" stroke="#2a2d3b" stroke-width="14"/><path d="M700 1212L790 1062L860 1092L990 940L1062 992L1162 850L1192 1140Z" fill="#2a2d3b"/><ellipse cx="612" cy="500" rx="50" ry="36" transform="rotate(-25 612 500)" fill="#2a2d3b"/><ellipse cx="878" cy="455" rx="26" ry="42" transform="rotate(-20 878 455)" fill="#2a2d3b"/><ellipse cx="892" cy="655" rx="58" ry="36" transform="rotate(-15 892 655)" fill="#2a2d3b"/><path d="M590 760C700 840 820 840 900 770" fill="none" stroke="#2a2d3b" stroke-width="12"/><path d="M860 230L900 330" fill="none" stroke="#2a2d3b" stroke-width="12"/></g><g fill="none" stroke="#c9cacb" stroke-width="3" stroke-linecap="round" stroke-linejoin="round"><circle cx="44.2" cy="246.4" r="10.2"/><path d="M51.8 254L59.6 262"/><path d="M37.9 317A12.5 12.5 0 1 1 36.7 331.3" stroke-linecap="butt"/><path d="M35 310.8V317.6H42" stroke-linecap="butt" stroke-linejoin="miter"/><path d="M47.6 317V326.3H41.6" stroke-linecap="butt" stroke-linejoin="miter"/></g><path d="M49.6 367.5Q52.35 374.95 59.8 377.7Q52.35 380.45 49.6 387.9Q46.85 380.45 39.400000000000006 377.7Q46.85 374.95 49.6 367.5ZM38.8 382.1Q40.53 386.77 45.199999999999996 388.5Q40.53 390.23 38.8 394.9Q37.07 390.23 32.4 388.5Q37.07 386.77 38.8 382.1Z" fill="#c9cacb"/><path d="M31.4 426V448.5H62" fill="none" stroke="#c9cacb" stroke-width="2.6"/><path d="M34.6 445V435.4L42.8 428.2L51.2 437L56.5 432.5L60 443.8V445Z" fill="#c9cacb"/><g fill="none" stroke="#c9cacb" stroke-width="2.9" stroke-linecap="butt"><path d="M59.3 492.6A13 13 0 0 1 33.7 497.6"/><path d="M34.6 488.6A13 13 0 0 1 52.4 482.6"/><path d="M52.4 491.2A6.7 6.7 0 1 1 48.6 487.8"/><path d="M46.2 494.2L58.3 481.6" stroke-width="3.2"/></g><circle cx="32.7" cy="493.5" r="1.7" fill="#c9cacb"/><circle cx="46.3" cy="494.3" r="2.2" fill="#c9cacb"/><g fill="none" stroke="#c9cacb" stroke-width="2.7" stroke-linejoin="miter"><path d="M46.8 551.2L57.7 545.3V556.6L46.8 563Z"/><path d="M40.3 562.3V547.2L52.4 540.4"/><path d="M34.3 559V544.6L46.4 537.6"/></g><path d="M45.9 593.3H49.5L49.7 605.4L57.9 606.3L45.8 623H43.3L43.6 610.9L34.8 610.1Z" fill="#c9cacb"/><polygon points="37.10,668.80 44.11,672.85 44.11,680.95 37.10,685.00 30.09,680.95 30.09,672.85" fill="#c9cacb"/><polygon points="46.00,683.90 53.01,687.95 53.01,696.05 46.00,700.10 38.99,696.05 38.99,687.95" fill="#c9cacb"/><polygon points="55.20,670.10 61.00,673.45 61.00,680.15 55.20,683.50 49.40,680.15 49.40,673.45" fill="none" stroke="#c9cacb" stroke-width="2.7"/><g fill="none" stroke="#c9cacb" stroke-width="2.7" stroke-linecap="butt"><path d="M39.5 750.1A6.9 6.9 0 0 1 36.6 736.5A9.4 9.4 0 0 1 55.2 737.3A6.5 6.5 0 1 1 52.5 750.2"/><path d="M44.9 734.5V755" stroke-width="2.6"/><path d="M48.9 741C48.2 738.2 41 738 41 741.6C41 745.4 49 743.8 49 747.8C49 751.6 41.6 751.6 40.7 748.4" stroke-width="2.3"/></g><g fill="#c9cacb"><rect x="29.9" y="783" width="32.2" height="3.9"/><rect x="29.9" y="791" width="6" height="4"/><rect x="40.1" y="791" width="22" height="4"/><rect x="40.1" y="799" width="12" height="3.9"/><rect x="56" y="799" width="6.1" height="3.9"/><rect x="46" y="807" width="6.1" height="3.9"/></g><g fill="none" stroke="#c9cacb" stroke-width="2.6" stroke-linejoin="miter"><path d="M37.2 845.3V840.1H60.2V857.4H52.5"/><path d="M34.6 852.9V847.6H48.4V865.2H42.5"/><rect x="31.9" y="856.2" width="6.1" height="11.5"/></g><g fill="none" stroke="#c9cacb" stroke-width="2.7" stroke-linecap="butt"><path d="M46.2 901.8C46 897.6 42.6 895.9 39 895.9C34.6 895.9 32 899.5 32 903.2C32 907.4 35 910.4 39.5 910.4H53C57.4 910.4 60.3 913.5 60.3 917.5C60.3 921.6 57.4 924.5 52.8 924.5C49 924.5 46.2 922.3 45 918.8"/><path d="M49.3 916.6H43.3V922.3" stroke-linejoin="miter"/></g><g fill="none" stroke="#c9cacb" stroke-width="2.6" stroke-linejoin="round"><path d="M46 953.3L56.5 958.2V969C56.5 974.6 51.6 978.6 46 980.4C40.4 978.6 35.6 974.6 35.6 969V958.2Z"/><path d="M46 953.3V980.4M35.8 961.6L46 966.7M35.8 967.8L46 973.4" stroke-width="2.3"/></g><path d="M44.3 1011.4A11.9 11.9 0 1 0 58.3 1023.5" fill="none" stroke="#fff" stroke-width="3" stroke-linecap="round"/><path d="M52.6 1010.6Q54.30 1015.20 58.9 1016.9Q54.30 1018.60 52.6 1023.1999999999999Q50.90 1018.60 46.300000000000004 1016.9Q50.90 1015.20 52.6 1010.6ZM44.7 1019.6Q45.73 1022.37 48.5 1023.4Q45.73 1024.43 44.7 1027.2Q43.67 1024.43 40.900000000000006 1023.4Q43.67 1022.37 44.7 1019.6Z" fill="#fff"/><g fill="none" stroke="#c9cacb" stroke-width="2.7" stroke-linecap="butt"><path d="M38.6 1098C38.6 1091.6 53.4 1091.6 53.4 1098V1104C53.4 1114.4 38.6 1114.4 38.6 1104Z"/><path d="M46 1112.5V1100.5L40 1095.5M46 1100.5L52 1095.5"/><path d="M42 1091.5V1088Q42 1085.2 46 1085.2Q50 1085.2 50 1088V1091.5"/><path d="M32.2 1086.2L39.8 1094.2M59.8 1086.2L52.2 1094.2M30.2 1099.6H38.6M53.4 1099.6H61.8M32.2 1113.6L39.6 1107.6M59.8 1113.6L52.4 1107.6"/></g><g fill="none" stroke="#c9cacb"><path d="M33.8 1168.3A14.6 14.6 0 0 1 45.1 1146.5" stroke-width="3.6" stroke-dasharray="2.5 2.2"/><path d="M58 1152.4A14.6 14.6 0 0 1 58.9 1167.9" stroke-width="4.4" stroke-linecap="round"/></g><path d="M55.3 1143.8L50 1159.6A3.4 3.4 0 0 1 43.9 1157.2Z" fill="#c9cacb"/><g fill="#c9cacb"><rect x="30.5" y="1197.5" width="6.2" height="3.6"/><rect x="38.8" y="1197.5" width="6.2" height="3.6"/><rect x="47" y="1197.5" width="6.2" height="3.6"/><rect x="30.5" y="1206" width="4" height="3.6"/><rect x="36.3" y="1206" width="4" height="3.6"/><rect x="30.5" y="1214.5" width="4" height="3.6"/><rect x="36.3" y="1214.5" width="2.5" height="3.6"/></g><circle cx="51" cy="1214.5" r="9.2" fill="none" stroke="#c9cacb" stroke-width="3.2"/><path d="M44.3 1221.2L37.3 1227.6" stroke="#c9cacb" stroke-width="3.6" stroke-linecap="round"/><path d="M46.3 1216.3A3.7 4.6 0 0 1 53.7 1216.3Z" fill="#c9cacb"/><path d="M31 1516V1498.5H37.5C35 1495 36 1488.5 40.3 1488.5C44.6 1488.5 45.6 1495 43 1498.5H50.5V1505.5C54 1503 61 1504 61 1508.3C61 1512.6 54 1513.6 50.5 1511V1516H43.5C45 1512.5 43.8 1510 41 1510C38.2 1510 37 1512.5 38.5 1516Z" fill="#c9cacb"/><clipPath id="av"><circle cx="46" cy="1565.6" r="20"/></clipPath><circle cx="46" cy="1565.6" r="20" fill="#1c0aa5"/><g clip-path="url(#av)" fill="#5fdde9" shape-rendering="crispEdges"><rect x="29.0" y="1549.0" width="4.6" height="4.6"/><rect x="33.1" y="1549.0" width="4.6" height="4.6"/><rect x="37.2" y="1549.0" width="4.6" height="4.6"/><rect x="49.5" y="1549.0" width="4.6" height="4.6"/><rect x="53.6" y="1549.0" width="4.6" height="4.6"/><rect x="57.7" y="1549.0" width="4.6" height="4.6"/><rect x="37.2" y="1553.1" width="4.6" height="4.6"/><rect x="41.3" y="1553.1" width="4.6" height="4.6"/><rect x="45.4" y="1553.1" width="4.6" height="4.6"/><rect x="49.5" y="1553.1" width="4.6" height="4.6"/><rect x="37.2" y="1557.2" width="4.6" height="4.6"/><rect x="41.3" y="1557.2" width="4.6" height="4.6"/><rect x="45.4" y="1557.2" width="4.6" height="4.6"/><rect x="49.5" y="1557.2" width="4.6" height="4.6"/><rect x="37.2" y="1561.3" width="4.6" height="4.6"/><rect x="49.5" y="1561.3" width="4.6" height="4.6"/><rect x="29.0" y="1565.4" width="4.6" height="4.6"/><rect x="33.1" y="1565.4" width="4.6" height="4.6"/><rect x="41.3" y="1565.4" width="4.6" height="4.6"/><rect x="45.4" y="1565.4" width="4.6" height="4.6"/><rect x="53.6" y="1565.4" width="4.6" height="4.6"/><rect x="57.7" y="1565.4" width="4.6" height="4.6"/><rect x="29.0" y="1569.5" width="4.6" height="4.6"/><rect x="33.1" y="1569.5" width="4.6" height="4.6"/><rect x="41.3" y="1569.5" width="4.6" height="4.6"/><rect x="45.4" y="1569.5" width="4.6" height="4.6"/><rect x="53.6" y="1569.5" width="4.6" height="4.6"/><rect x="57.7" y="1569.5" width="4.6" height="4.6"/><rect x="29.0" y="1573.6" width="4.6" height="4.6"/><rect x="33.1" y="1573.6" width="4.6" height="4.6"/><rect x="37.2" y="1573.6" width="4.6" height="4.6"/><rect x="49.5" y="1573.6" width="4.6" height="4.6"/><rect x="53.6" y="1573.6" width="4.6" height="4.6"/><rect x="57.7" y="1573.6" width="4.6" height="4.6"/><rect x="33.1" y="1577.7" width="4.6" height="4.6"/><rect x="41.3" y="1577.7" width="4.6" height="4.6"/><rect x="45.4" y="1577.7" width="4.6" height="4.6"/><rect x="53.6" y="1577.7" width="4.6" height="4.6"/></g></svg>
<svg class="b" style="left:0;top:1694px" width="20" height="20" viewBox="0 0 20 20"><path d="M0 0A20 20 0 0 0 20 20H0Z" fill="#b89a62"/></svg>
<svg class="b" style="left:3002px;top:1694px" width="20" height="20" viewBox="0 0 20 20"><path d="M20 0A20 20 0 0 1 0 20H20Z" fill="#6b5a3c"/></svg>
</div>
</body></html>
